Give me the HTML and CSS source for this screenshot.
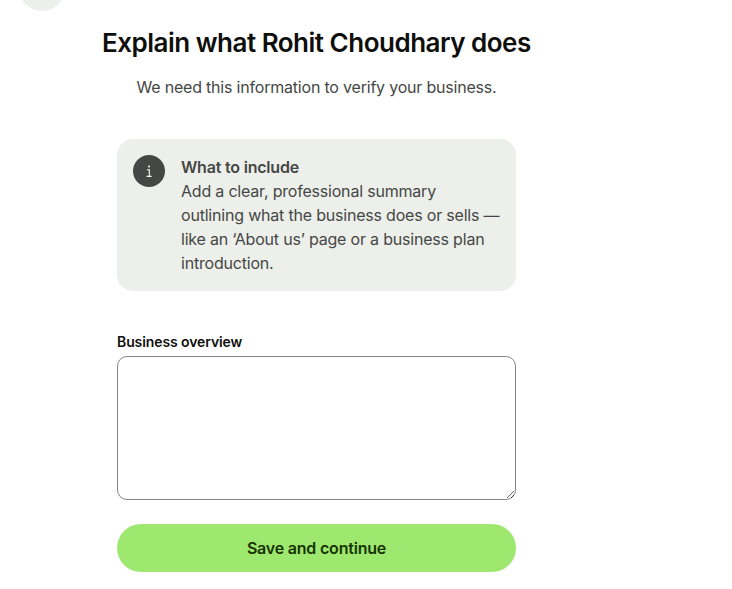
FILE: index.html
```html
<!DOCTYPE html>
<html lang="en">
<head>
    <meta charset="UTF-8">
    <meta name="viewport" content="width=device-width, initial-scale=1.0">
    <title>Explain what Rohit Choudhary does</title>
    <link rel="stylesheet" href="styles.css">
</head>
<body>
    <div class="back-button"></div>
    <main class="content">
        <h1>Explain what Rohit Choudhary does</h1>
        <p class="subtitle">We need this information to verify your business.</p>

        <div class="info-box">
            <div class="info-icon">
                <svg width="8" height="14" viewBox="0 0 8 14" fill="none">
                    <circle cx="4" cy="2.4" r="1" fill="#fff"/>
                    <path d="M2 5.8H4.3V12.2M1.6 12.4H6.6" stroke="#fff" stroke-width="1.1"/>
                </svg>
            </div>
            <div class="info-text">
                <strong>What to include</strong>
                <p>Add a clear, professional summary outlining what the business does or sells — like an ‘About us’ page or a business plan introduction.</p>
            </div>
        </div>

        <label class="field-label" for="overview">Business overview</label>
        <textarea class="field-input" id="overview"></textarea>

        <button class="btn-save">Save and continue</button>
    </main>
</body>
</html>
```

FILE: styles.css
```css
* {
    margin: 0;
    padding: 0;
    box-sizing: border-box;
}

body {
    font-family: Inter, sans-serif;
    background: #fff;
    color: #454745;
    height: 589px;
    overflow: hidden;
    position: relative;
}

/* Circle cut off by the top of the window */
.back-button {
    position: absolute;
    left: 19px;
    top: -35px;
    width: 46px;
    height: 46px;
    border-radius: 50%;
    background: #edefeb;
}

.content {
    width: 399px;
    margin-left: 117px;
    padding-top: 25px;
    display: flex;
    flex-direction: column;
}

h1 {
    font-size: 26px;
    line-height: 36px;
    font-weight: 600;
    letter-spacing: -0.5px;
    color: #0e0f0c;
    white-space: nowrap;
    margin-left: -15px;
}

.subtitle {
    font-size: 16px;
    line-height: 24px;
    letter-spacing: -0.2px;
    text-align: center;
    margin-top: 14px;
}

.info-box {
    display: flex;
    gap: 16px;
    margin-top: 40px;
    padding: 16px;
    background: #edefeb;
    border-radius: 16px;
}

.info-icon {
    flex: none;
    width: 32px;
    height: 32px;
    border-radius: 50%;
    background: #454745;
    display: flex;
    align-items: center;
    justify-content: center;
}

.info-text {
    font-size: 16px;
    line-height: 24px;
    letter-spacing: -0.2px;
}

.info-text strong {
    font-weight: 600;
}

.field-label {
    font-size: 14px;
    line-height: 20px;
    font-weight: 600;
    letter-spacing: -0.1px;
    color: #0e0f0c;
    margin-top: 41px;
    margin-bottom: 4px;
}

.field-input {
    width: 100%;
    height: 144px;
    border: 1px solid #868685;
    border-radius: 10px;
    background: #fff;
    display: block;
}

.btn-save {
    margin-top: 24px;
    height: 48px;
    border: none;
    border-radius: 24px;
    background: #9fe870;
    color: #163300;
    font-family: Inter, sans-serif;
    font-size: 16px;
    font-weight: 600;
    letter-spacing: -0.2px;
}
```
